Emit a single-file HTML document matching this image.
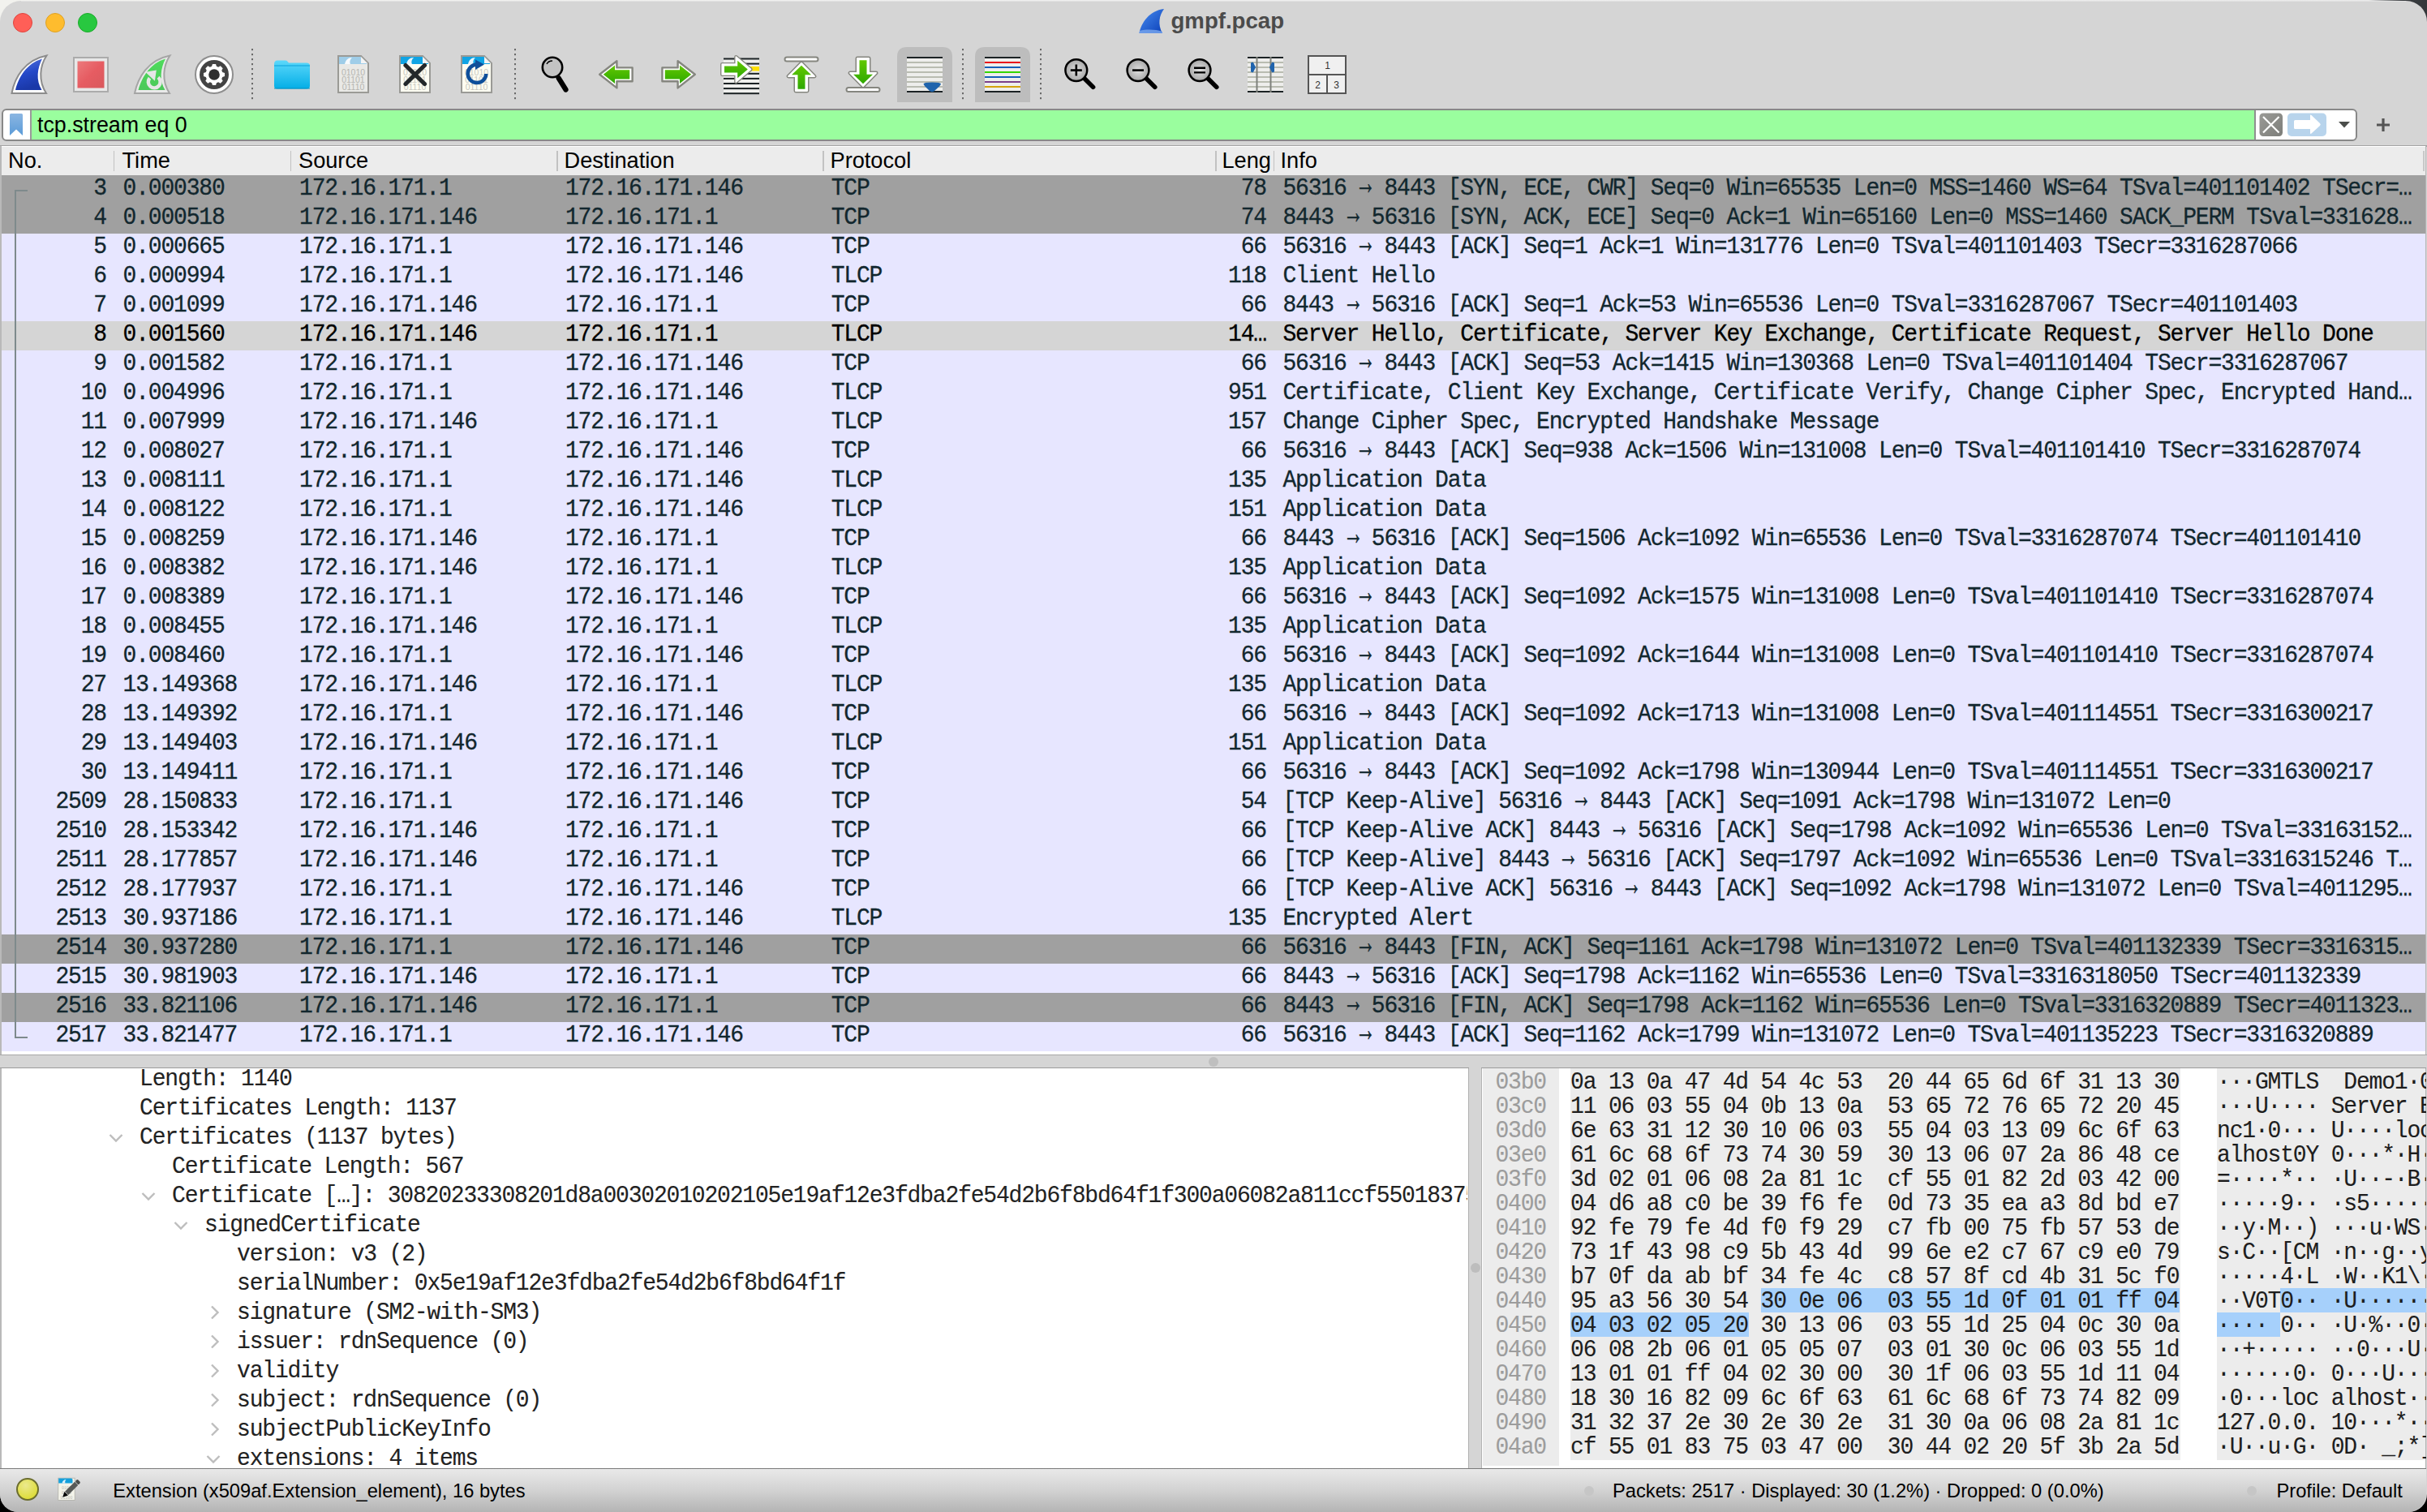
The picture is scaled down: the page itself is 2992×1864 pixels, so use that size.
<!DOCTYPE html><html><head><meta charset="utf-8"><style>
html,body{margin:0;padding:0;width:2992px;height:1864px;overflow:hidden;background:#000;}
#win{position:absolute;left:0;top:0;width:2992px;height:1864px;overflow:hidden;}
.m{position:absolute;white-space:pre;font-family:"Liberation Mono",monospace;font-size:28.0px;letter-spacing:-1.1727px;line-height:31.72px;transform:scaleY(1.06);transform-origin:0 23.31px;-webkit-text-stroke:0.3px currentColor;}
.ar{display:inline-block;transform:translateY(-1.0px) scale(0.88,1.4);transform-origin:50% 23.31px;}
.s{position:absolute;white-space:pre;font-family:"Liberation Sans",sans-serif;}
.r{position:absolute;}
svg{position:absolute;overflow:visible;}
</style></head><body><div id="win"><div class="r" style="left:0;top:0;width:2992px;height:40px;background:linear-gradient(90deg,#f2f2ee 0%,#eeeeee 60%,#eaeaea 97.6%,#3a3d40 99.0%,#33373a 100%);"></div>
<div class="r" style="left:0;top:1800px;width:2992px;height:64px;background:#000;"></div>
<div class="r" style="left:0;top:1.2px;width:2992px;height:1862.8px;background:#d5d5d5;border-radius:26px 26px 22px 22px;"></div>
<div class="r" style="left:26px;top:1.2px;width:2940px;height:1.2px;background:#e2e2e2;"></div>
<div class="r" style="left:16px;top:16px;width:22px;height:22px;border-radius:50%;background:#ff5f57;border:1px solid #e0443e;"></div>
<div class="r" style="left:56px;top:16px;width:22px;height:22px;border-radius:50%;background:#febc2e;border:1px solid #dea123;"></div>
<div class="r" style="left:96px;top:16px;width:22px;height:22px;border-radius:50%;background:#28c840;border:1px solid #1aab29;"></div>
<svg style="left:1404px;top:10px" width="32" height="32" viewBox="0 0 32 32">
<defs><linearGradient id="tfin" x1="0" y1="0" x2="1" y2="1"><stop offset="0" stop-color="#4a8ef0"/><stop offset="1" stop-color="#0a3fb8"/></linearGradient></defs>
<path d="M0.5,31 C3,18 13,3 31,1 C25,9 23,20 29,31 Z" fill="url(#tfin)"/>
<path d="M1,28 C9,26 20,26 29,29 L29,31 L0.5,31 Z" fill="#7aa8ee" opacity="0.8"/>
</svg>
<div class="s" style="left:1443.50px;top:11.31px;font-size:27.6px;line-height:30.83px;color:#4b4b4b;font-weight:700;">gmpf.pcap</div>
<svg style="left:0;top:0" width="1700" height="135" viewBox="0 0 1700 135"><defs>
<linearGradient id="gblue" x1="0" y1="0" x2="0.3" y2="1"><stop offset="0" stop-color="#5a78dc"/><stop offset="0.55" stop-color="#2448c8"/><stop offset="1" stop-color="#1a38a8"/></linearGradient>
<linearGradient id="ggreenfin" x1="0" y1="0" x2="0" y2="1"><stop offset="0" stop-color="#4fdc5c"/><stop offset="1" stop-color="#4cc85a"/></linearGradient>
<linearGradient id="gred" x1="0" y1="0" x2="1" y2="1"><stop offset="0" stop-color="#ec7a7c"/><stop offset="0.5" stop-color="#e65c62"/><stop offset="1" stop-color="#d9595d"/></linearGradient>
<linearGradient id="gfold" x1="0" y1="0" x2="0" y2="1"><stop offset="0" stop-color="#5cd8fb"/><stop offset="1" stop-color="#03aee6"/></linearGradient>
<radialGradient id="gmag" cx="0.5" cy="0.5" r="0.6"><stop offset="0" stop-color="#e2e2e2"/><stop offset="1" stop-color="#9a9a9a"/></radialGradient>
<linearGradient id="garrr" x1="0" y1="0" x2="0" y2="1"><stop offset="0" stop-color="#62c800"/><stop offset="1" stop-color="#2ea800"/></linearGradient>
<linearGradient id="garrl" x1="0" y1="1" x2="0" y2="0"><stop offset="0" stop-color="#62c800"/><stop offset="1" stop-color="#2ea800"/></linearGradient>
<linearGradient id="garru" x1="0" y1="0" x2="1" y2="0"><stop offset="0" stop-color="#2ea800"/><stop offset="1" stop-color="#62c800"/></linearGradient>
<linearGradient id="garrd" x1="0" y1="0" x2="1" y2="0"><stop offset="0" stop-color="#62c800"/><stop offset="1" stop-color="#2ea800"/></linearGradient>
</defs><path d="M14.5,115 C18,96 30,74 57.5,68.5 C49,81 47,100 57,115 Z" fill="#fff" stroke="#8c8c8c" stroke-width="2"/><path d="M19,111 C23,95 33,78 52,72.5 C46,84 44,99 51.5,111 Z" fill="url(#gblue)"/><rect x="91" y="71" width="42" height="42" fill="#e8e8e8" stroke="#ababab" stroke-width="2"/><rect x="95.5" y="75.5" width="33" height="33" fill="url(#gred)"/><path d="M166,115 C170,96 182,74 209.5,68.5 C201,81 199,100 209,115 Z" fill="#e9e9e9" stroke="#a5a5a5" stroke-width="2"/><path d="M170.5,111 C175,95 185,78 204,72.5 C198,84 196,99 203.5,111 Z" fill="url(#ggreenfin)"/><path d="M194.96,95.33 A7.4,7.4 0 1 1 184.53,96.24" fill="none" stroke="#e6e6e6" stroke-width="4.4"/><path d="M179.2,88.8 L192.8,86.6 L190.9,99.8 Z" fill="#e6e6e6"/><circle cx="264" cy="92" r="23" fill="#fff" stroke="#8e8e8e" stroke-width="2"/><circle cx="264" cy="92" r="18" fill="#434343"/><path d="M261.08,81.81 L261.94,78.96 L266.06,78.96 L266.92,81.81 L269.14,82.73 L271.76,81.32 L274.68,84.24 L273.27,86.86 L274.19,89.08 L277.04,89.94 L277.04,94.06 L274.19,94.92 L273.27,97.14 L274.68,99.76 L271.76,102.68 L269.14,101.27 L266.92,102.19 L266.06,105.04 L261.94,105.04 L261.08,102.19 L258.86,101.27 L256.24,102.68 L253.32,99.76 L254.73,97.14 L253.81,94.92 L250.96,94.06 L250.96,89.94 L253.81,89.08 L254.73,86.86 L253.32,84.24 L256.24,81.32 L258.86,82.73 Z" fill="#fff"/><circle cx="264" cy="92" r="6.8" fill="#2e2e2e"/><rect x="310" y="60" width="2" height="2.2" fill="#6a6a6a"/><rect x="310" y="66" width="2" height="2.2" fill="#6a6a6a"/><rect x="310" y="72" width="2" height="2.2" fill="#6a6a6a"/><rect x="310" y="78" width="2" height="2.2" fill="#6a6a6a"/><rect x="310" y="84" width="2" height="2.2" fill="#6a6a6a"/><rect x="310" y="90" width="2" height="2.2" fill="#6a6a6a"/><rect x="310" y="96" width="2" height="2.2" fill="#6a6a6a"/><rect x="310" y="102" width="2" height="2.2" fill="#6a6a6a"/><rect x="310" y="108" width="2" height="2.2" fill="#6a6a6a"/><rect x="310" y="114" width="2" height="2.2" fill="#6a6a6a"/><rect x="310" y="120" width="2" height="2.2" fill="#6a6a6a"/><rect x="634" y="60" width="2" height="2.2" fill="#6a6a6a"/><rect x="634" y="66" width="2" height="2.2" fill="#6a6a6a"/><rect x="634" y="72" width="2" height="2.2" fill="#6a6a6a"/><rect x="634" y="78" width="2" height="2.2" fill="#6a6a6a"/><rect x="634" y="84" width="2" height="2.2" fill="#6a6a6a"/><rect x="634" y="90" width="2" height="2.2" fill="#6a6a6a"/><rect x="634" y="96" width="2" height="2.2" fill="#6a6a6a"/><rect x="634" y="102" width="2" height="2.2" fill="#6a6a6a"/><rect x="634" y="108" width="2" height="2.2" fill="#6a6a6a"/><rect x="634" y="114" width="2" height="2.2" fill="#6a6a6a"/><rect x="634" y="120" width="2" height="2.2" fill="#6a6a6a"/><rect x="1186" y="60" width="2" height="2.2" fill="#6a6a6a"/><rect x="1186" y="66" width="2" height="2.2" fill="#6a6a6a"/><rect x="1186" y="72" width="2" height="2.2" fill="#6a6a6a"/><rect x="1186" y="78" width="2" height="2.2" fill="#6a6a6a"/><rect x="1186" y="84" width="2" height="2.2" fill="#6a6a6a"/><rect x="1186" y="90" width="2" height="2.2" fill="#6a6a6a"/><rect x="1186" y="96" width="2" height="2.2" fill="#6a6a6a"/><rect x="1186" y="102" width="2" height="2.2" fill="#6a6a6a"/><rect x="1186" y="108" width="2" height="2.2" fill="#6a6a6a"/><rect x="1186" y="114" width="2" height="2.2" fill="#6a6a6a"/><rect x="1186" y="120" width="2" height="2.2" fill="#6a6a6a"/><rect x="1282" y="60" width="2" height="2.2" fill="#6a6a6a"/><rect x="1282" y="66" width="2" height="2.2" fill="#6a6a6a"/><rect x="1282" y="72" width="2" height="2.2" fill="#6a6a6a"/><rect x="1282" y="78" width="2" height="2.2" fill="#6a6a6a"/><rect x="1282" y="84" width="2" height="2.2" fill="#6a6a6a"/><rect x="1282" y="90" width="2" height="2.2" fill="#6a6a6a"/><rect x="1282" y="96" width="2" height="2.2" fill="#6a6a6a"/><rect x="1282" y="102" width="2" height="2.2" fill="#6a6a6a"/><rect x="1282" y="108" width="2" height="2.2" fill="#6a6a6a"/><rect x="1282" y="114" width="2" height="2.2" fill="#6a6a6a"/><rect x="1282" y="120" width="2" height="2.2" fill="#6a6a6a"/><path d="M338,79 Q338,74.5 342,74.5 L352,74.5 Q354,74.5 355,76.5 L356,77.5 L378,77.5 Q382,77.5 382,81 L382,106 Q382,109.5 378,109.5 L342,109.5 Q338,109.5 338,106 Z" fill="url(#gfold)"/><path d="M338,81 L382,81" stroke="#0aa0d8" stroke-width="1"/><rect x="338" y="108" width="44" height="2" fill="#0891c0" opacity="0.5"/><path d="M417,69 L445,69 L454,78 L454,114 L417,114 Z" fill="#e9e9e6" stroke="#9a9a96" stroke-width="2"/><path d="M418,70 L444.5,70 L452,77.5 L452,79 L418,79 Z" fill="#9fcde8"/><path d="M445,70 L445,78 L453,78 Z" fill="#f4f4f4"/><path d="M425,79 C426,74 429,71 434,71 C431,74 431,77 432,79 Z" fill="#fff" opacity="0.9"/><text x="435.5" y="93.0" font-family="Liberation Sans" font-size="10.5" fill="#b5b5b0" text-anchor="middle" letter-spacing="0">01010</text><text x="435.5" y="102.2" font-family="Liberation Sans" font-size="10.5" fill="#b5b5b0" text-anchor="middle" letter-spacing="0">01101</text><text x="435.5" y="111.4" font-family="Liberation Sans" font-size="10.5" fill="#b5b5b0" text-anchor="middle" letter-spacing="0">01110</text><path d="M493,69 L521,69 L530,78 L530,114 L493,114 Z" fill="#fdfdf2" stroke="#9a9a96" stroke-width="2"/><path d="M494,70 L520.5,70 L528,77.5 L528,79 L494,79 Z" fill="#10a4e4"/><path d="M521,70 L521,78 L529,78 Z" fill="#f4f4f4"/><path d="M501,79 C502,74 505,71 510,71 C507,74 507,77 508,79 Z" fill="#fff" opacity="0.9"/><text x="511.5" y="93.0" font-family="Liberation Sans" font-size="10.5" fill="#c8c8c0" text-anchor="middle" letter-spacing="0">01010</text><text x="511.5" y="102.2" font-family="Liberation Sans" font-size="10.5" fill="#c8c8c0" text-anchor="middle" letter-spacing="0">01101</text><text x="511.5" y="111.4" font-family="Liberation Sans" font-size="10.5" fill="#c8c8c0" text-anchor="middle" letter-spacing="0">01110</text><path d="M500,80.5 L523.5,103.5 M523.5,80.5 L500,103.5" stroke="#23282a" stroke-width="5.2" stroke-linecap="round"/><path d="M569,69 L597,69 L606,78 L606,114 L569,114 Z" fill="#fdfdf2" stroke="#9a9a96" stroke-width="2"/><path d="M570,70 L596.5,70 L604,77.5 L604,79 L570,79 Z" fill="#10a4e4"/><path d="M597,70 L597,78 L605,78 Z" fill="#f4f4f4"/><path d="M577,79 C578,74 581,71 586,71 C583,74 583,77 584,79 Z" fill="#fff" opacity="0.9"/><text x="587.5" y="93.0" font-family="Liberation Sans" font-size="10.5" fill="#c8c8c0" text-anchor="middle" letter-spacing="0">01010</text><text x="587.5" y="102.2" font-family="Liberation Sans" font-size="10.5" fill="#c8c8c0" text-anchor="middle" letter-spacing="0">01101</text><text x="587.5" y="111.4" font-family="Liberation Sans" font-size="10.5" fill="#c8c8c0" text-anchor="middle" letter-spacing="0">01110</text><path d="M599.3,91 A11.3,11.3 0 1 1 588,79.5" fill="none" stroke="#0e4f9a" stroke-width="4.5"/><path d="M586,73.5 L597,79.5 L586,86 Z" fill="#0e4f9a"/><line x1="688.5" y1="96" x2="697.5" y2="110.5" stroke="#000" stroke-width="6.2" stroke-linecap="round"/><circle cx="681" cy="83" r="12.2" fill="#c3c3c3" stroke="#000" stroke-width="2.6"/><path d="M674,79 Q676,75 681,75" fill="none" stroke="#000" stroke-width="1.5"/><g transform="translate(760,91.8) rotate(180)"><path d="M-19.6,-8.4 L-0.4,-8.4 L-0.4,-16.6 L20.8,0 L-0.4,16.6 L-0.4,8.4 L-19.6,8.4 Z" fill="#fff" stroke="#85867f" stroke-width="2.4" stroke-linejoin="round"/><path d="M-16.2,-5.6 L2,-5.6 L2,-11.2 L16.2,0 L2,11.2 L2,5.6 L-16.2,5.6 Z" fill="url(#garrl)"/></g><g transform="translate(836,91.8) rotate(0)"><path d="M-19.6,-8.4 L-0.4,-8.4 L-0.4,-16.6 L20.8,0 L-0.4,16.6 L-0.4,8.4 L-19.6,8.4 Z" fill="#fff" stroke="#85867f" stroke-width="2.4" stroke-linejoin="round"/><path d="M-16.2,-5.6 L2,-5.6 L2,-11.2 L16.2,0 L2,11.2 L2,5.6 L-16.2,5.6 Z" fill="url(#garrr)"/></g><rect x="892" y="72" width="44" height="44" fill="#eeeeec"/><rect x="892" y="71.5" width="44" height="2" fill="#1b2224"/><rect x="892" y="77.6" width="44" height="2" fill="#1b2224"/><rect x="892" y="89.8" width="44" height="2" fill="#1b2224"/><rect x="892" y="95.9" width="44" height="2" fill="#1b2224"/><rect x="892" y="102.0" width="44" height="2" fill="#1b2224"/><rect x="892" y="108.1" width="44" height="2" fill="#1b2224"/><rect x="892" y="114.19999999999999" width="44" height="2" fill="#1b2224"/><rect x="925" y="82" width="11" height="5.5" fill="#ffe000"/><g transform="translate(906.5,85.5) scale(0.9)"><path d="M-18,-7 L1,-7 L1,-17 L21,0 L1,17 L1,7 L-18,7 Z" fill="#fff" stroke="#85867f" stroke-width="5" stroke-linejoin="round"/><path d="M-18,-7 L1,-7 L1,-17 L21,0 L1,17 L1,7 L-18,7 Z" fill="#fff" stroke="#fff" stroke-width="2" stroke-linejoin="round"/><path d="M-15,-4.5 L3,-4.5 L3,-12 L17,0 L3,12 L3,4.5 L-15,4.5 Z" fill="url(#garrr)"/></g><rect x="967.5" y="70.5" width="41" height="5" rx="2.5" fill="#fff" stroke="#85867f" stroke-width="2"/><g transform="translate(988,95) rotate(-90) scale(0.95,1)"><path d="M-18,-7 L1,-7 L1,-16 L18,0 L1,16 L1,7 L-18,7 Z" fill="#fff" stroke="#85867f" stroke-width="5" stroke-linejoin="round"/><path d="M-18,-7 L1,-7 L1,-16 L18,0 L1,16 L1,7 L-18,7 Z" fill="#fff" stroke="#fff" stroke-width="2" stroke-linejoin="round"/><path d="M-15.5,-4.5 L3,-4.5 L3,-12 L15,0 L3,12 L3,4.5 L-15.5,4.5 Z" fill="url(#garru)"/></g><rect x="1043.5" y="108" width="41" height="5" rx="2.5" fill="#fff" stroke="#85867f" stroke-width="2"/><g transform="translate(1064,89) rotate(90) scale(0.95,1)"><path d="M-18,-7 L1,-7 L1,-16 L18,0 L1,16 L1,7 L-18,7 Z" fill="#fff" stroke="#85867f" stroke-width="5" stroke-linejoin="round"/><path d="M-18,-7 L1,-7 L1,-16 L18,0 L1,16 L1,7 L-18,7 Z" fill="#fff" stroke="#fff" stroke-width="2" stroke-linejoin="round"/><path d="M-15.5,-4.5 L3,-4.5 L3,-12 L15,0 L3,12 L3,4.5 L-15.5,4.5 Z" fill="url(#garrd)"/></g><path d="M1106,126 L1106,70 Q1106,58 1118,58 L1162,58 Q1174,58 1174,70 L1174,126 Z" fill="#bdbdbd"/><rect x="1118" y="70" width="44" height="44" fill="#eeeeec"/><rect x="1118" y="70" width="44" height="2" fill="#1b2224"/><rect x="1118" y="112" width="44" height="2" fill="#1b2224"/><rect x="1118" y="76" width="44" height="2" fill="#b9bcb1"/><rect x="1118" y="82" width="44" height="2" fill="#b9bcb1"/><rect x="1118" y="88" width="44" height="2" fill="#b9bcb1"/><rect x="1118" y="94" width="44" height="2" fill="#b9bcb1"/><rect x="1118" y="100" width="44" height="2" fill="#b9bcb1"/><rect x="1118" y="106" width="44" height="2" fill="#b9bcb1"/><path d="M1138.5,103.5 Q1138.5,101.5 1149,101.5 Q1160,101.5 1160,103.5 Q1160,105 1152,112 Q1149,114.5 1146,112 Q1138.5,105 1138.5,103.5 Z" fill="#2064ac"/><path d="M1202,126 L1202,70 Q1202,58 1214,58 L1258,58 Q1270,58 1270,70 L1270,126 Z" fill="#bdbdbd"/><rect x="1214" y="70" width="44" height="44" fill="#eeeeec"/><rect x="1214" y="70" width="44" height="2" fill="#1b2224"/><rect x="1214" y="112" width="44" height="2" fill="#1b2224"/><rect x="1214" y="76" width="44" height="2" fill="#e8131b"/><rect x="1214" y="82" width="44" height="2" fill="#1560b8"/><rect x="1214" y="88" width="44" height="2" fill="#33d600"/><rect x="1214" y="94" width="44" height="2" fill="#1560b8"/><rect x="1214" y="100" width="44" height="2" fill="#7a3e8a"/><rect x="1214" y="106" width="44" height="2" fill="#d4a20e"/><line x1="1335.108" y1="94.90799999999999" x2="1347.57" y2="107.36999999999999" stroke="#000" stroke-width="5.6" stroke-linecap="round"/><circle cx="1326.8" cy="86.6" r="13.4" fill="url(#gmag)" stroke="#000" stroke-width="2.5"/><path d="M1319.8,86.6 H1333.8 M1326.8,79.6 V93.6" stroke="#000" stroke-width="2.6"/><line x1="1411.308" y1="94.90799999999999" x2="1423.77" y2="107.36999999999999" stroke="#000" stroke-width="5.6" stroke-linecap="round"/><circle cx="1403" cy="86.6" r="13.4" fill="url(#gmag)" stroke="#000" stroke-width="2.5"/><path d="M1396,86.6 H1410" stroke="#000" stroke-width="2.6"/><line x1="1487.308" y1="94.90799999999999" x2="1499.77" y2="107.36999999999999" stroke="#000" stroke-width="5.6" stroke-linecap="round"/><circle cx="1479" cy="86.6" r="13.4" fill="url(#gmag)" stroke="#000" stroke-width="2.5"/><path d="M1472,83.8 H1486 M1472,89.39999999999999 H1486" stroke="#000" stroke-width="2.4"/><rect x="1538" y="70" width="44" height="44" fill="#eeeeec"/><rect x="1538" y="76" width="44" height="2" fill="#b9bcb1"/><rect x="1538" y="82" width="44" height="2" fill="#b9bcb1"/><rect x="1538" y="88" width="44" height="2" fill="#b9bcb1"/><rect x="1538" y="94" width="44" height="2" fill="#b9bcb1"/><rect x="1538" y="100" width="44" height="2" fill="#b9bcb1"/><rect x="1538" y="106" width="44" height="2" fill="#b9bcb1"/><rect x="1538" y="70" width="44" height="2" fill="#1b2224"/><rect x="1538" y="112" width="44" height="2" fill="#1b2224"/><rect x="1548.5" y="70" width="2" height="44" fill="#7f817c"/><rect x="1565.5" y="70" width="2" height="44" fill="#7f817c"/><path d="M1542,78 Q1543,76 1545,77 L1548,83 L1545,89 Q1543,90 1542,88 Z" fill="#1f63ad"/><path d="M1571,78 Q1570,76 1568,77 L1565,83 L1568,89 Q1570,90 1571,88 Z" fill="#1f63ad"/><rect x="1613" y="69" width="46" height="46" fill="#f0f0f0" stroke="#555" stroke-width="2"/><path d="M1613,92 H1659 M1636,92 V115" stroke="#555" stroke-width="2"/><text x="1636.5" y="85" font-family="Liberation Sans" font-size="12" fill="#333" text-anchor="middle">1</text><text x="1624.5" y="108.5" font-family="Liberation Sans" font-size="12" fill="#333" text-anchor="middle">2</text><text x="1647.5" y="108.5" font-family="Liberation Sans" font-size="12" fill="#333" text-anchor="middle">3</text></svg>
<div class="r" style="left:2px;top:134px;width:2900px;height:36px;border:2px solid #888;border-radius:6px;background:#fff;"></div>
<div class="r" style="left:38px;top:136px;width:2741px;height:36px;background:#9afe9e;"></div>
<div class="r" style="left:37px;top:136px;width:1.6px;height:36px;background:#9a9a9a;"></div>
<div class="r" style="left:2779px;top:136px;width:2px;height:36px;background:#8f8f8f;"></div>
<svg style="left:10px;top:138px" width="22" height="32" viewBox="0 0 22 32">
<defs><linearGradient id="gbm" x1="0" y1="0" x2="0" y2="1"><stop offset="0" stop-color="#8bb6e2"/><stop offset="1" stop-color="#5b9bd8"/></linearGradient></defs>
<path d="M2,3.5 Q2,2 3.5,2 L16.5,2 Q18,2 18,3.5 L18,29 L10,21.5 L2,29 Z" fill="url(#gbm)"/></svg>
<div class="s" style="left:46.00px;top:139.74px;font-size:26.8px;line-height:29.94px;color:#000;font-weight:400;">tcp.stream eq 0</div>
<svg style="left:2785px;top:139px" width="30" height="30" viewBox="0 0 30 30">
<defs><linearGradient id="gclr" x1="0" y1="0" x2="1" y2="1"><stop offset="0" stop-color="#9a9a96"/><stop offset="1" stop-color="#7d7e7a"/></linearGradient></defs>
<rect x="0.5" y="0.5" width="28.5" height="28.5" rx="4.5" fill="url(#gclr)"/>
<path d="M5,5 L24.5,24.5 M24.5,5 L5,24.5" stroke="#fff" stroke-width="2.2"/></svg>
<svg style="left:2820px;top:139px" width="50" height="30" viewBox="0 0 50 30">
<rect x="0" y="0.5" width="48" height="28.5" rx="5" fill="#b8d4ec"/>
<path d="M8,10.5 Q8,9 9.5,9 L28,9 L28,3.5 Q28,2 29.5,3 L40,13 Q41.5,14.5 40,16 L29.5,25.5 Q28,26.5 28,25 L28,20 L9.5,20 Q8,20 8,18.5 Z" fill="#fff"/></svg>
<svg style="left:2882px;top:149px" width="16" height="10" viewBox="0 0 16 10"><path d="M1,1 L15,1 L8,8.5 Z" fill="#4a4d4a"/></svg>
<svg style="left:2929px;top:145px" width="18" height="18" viewBox="0 0 18 18"><path d="M1,9 H17 M9,1 V17" stroke="#555" stroke-width="3.2"/></svg>
<div class="r" style="left:0px;top:178.5px;width:2992px;height:2.5px;background:#a4a4a4;"></div>
<div class="r" style="left:0px;top:180px;width:2990px;height:1120px;background:#fff;"></div>
<div class="r" style="left:0px;top:180px;width:1.8px;height:1120px;background:#b9b9b9;"></div>
<div class="r" style="left:2990px;top:180px;width:1.2px;height:1120px;background:#b5b5b5;"></div>
<div class="r" style="left:2px;top:181px;width:2988px;height:35px;background:#ececec;"></div>
<div class="r" style="left:139.95px;top:186px;width:1.5px;height:25px;background:#c2c2c2;"></div>
<div class="r" style="left:357.75px;top:186px;width:1.5px;height:25px;background:#c2c2c2;"></div>
<div class="r" style="left:686.25px;top:186px;width:1.5px;height:25px;background:#c2c2c2;"></div>
<div class="r" style="left:1014.45px;top:186px;width:1.5px;height:25px;background:#c2c2c2;"></div>
<div class="r" style="left:1498.45px;top:186px;width:1.5px;height:25px;background:#c2c2c2;"></div>
<div class="r" style="left:1569.75px;top:186px;width:1.5px;height:25px;background:#c2c2c2;"></div>
<div class="r" style="left:2986.5px;top:186px;width:2px;height:25px;background:#c8c8c8;"></div>
<div class="s" style="left:10.00px;top:183.18px;font-size:27.2px;line-height:30.39px;color:#000;font-weight:400;">No.</div>
<div class="s" style="left:150.50px;top:183.18px;font-size:27.2px;line-height:30.39px;color:#000;font-weight:400;">Time</div>
<div class="s" style="left:368.00px;top:183.18px;font-size:27.2px;line-height:30.39px;color:#000;font-weight:400;">Source</div>
<div class="s" style="left:695.50px;top:183.18px;font-size:27.2px;line-height:30.39px;color:#000;font-weight:400;">Destination</div>
<div class="s" style="left:1023.50px;top:183.18px;font-size:27.2px;line-height:30.39px;color:#000;font-weight:400;">Protocol</div>
<div class="s" style="left:1506.50px;top:183.18px;font-size:27.2px;line-height:30.39px;color:#000;font-weight:400;width:62px;overflow:hidden;">Leng</div>
<div class="s" style="left:1578.50px;top:183.18px;font-size:27.2px;line-height:30.39px;color:#000;font-weight:400;">Info</div>
<div class="r" style="left:2px;top:216px;width:2988px;height:36px;background:#a0a0a0;"></div>
<div class="m" style="left:115.37px;top:216.69px;color:#12272e;">3</div>
<div class="m" style="left:151.55px;top:216.69px;color:#12272e;">0.000380</div>
<div class="m" style="left:369.05px;top:216.69px;color:#12272e;">172.16.171.1</div>
<div class="m" style="left:696.95px;top:216.69px;color:#12272e;">172.16.171.146</div>
<div class="m" style="left:1024.70px;top:216.69px;color:#12272e;">TCP</div>
<div class="m" style="left:1529.64px;top:216.69px;color:#12272e;">78</div>
<div class="m" style="left:1581.45px;top:216.69px;color:#12272e;width:1400px;overflow:hidden;">56316 <span class="ar">→</span> 8443 [SYN, ECE, CWR] Seq=0 Win=65535 Len=0 MSS=1460 WS=64 TSval=401101402 TSecr=…</div>
<div class="r" style="left:2px;top:252px;width:2988px;height:36px;background:#a0a0a0;"></div>
<div class="m" style="left:115.37px;top:252.69px;color:#12272e;">4</div>
<div class="m" style="left:151.55px;top:252.69px;color:#12272e;">0.000518</div>
<div class="m" style="left:369.05px;top:252.69px;color:#12272e;">172.16.171.146</div>
<div class="m" style="left:696.95px;top:252.69px;color:#12272e;">172.16.171.1</div>
<div class="m" style="left:1024.70px;top:252.69px;color:#12272e;">TCP</div>
<div class="m" style="left:1529.64px;top:252.69px;color:#12272e;">74</div>
<div class="m" style="left:1581.45px;top:252.69px;color:#12272e;width:1400px;overflow:hidden;">8443 <span class="ar">→</span> 56316 [SYN, ACK, ECE] Seq=0 Ack=1 Win=65160 Len=0 MSS=1460 SACK_PERM TSval=331628…</div>
<div class="r" style="left:2px;top:288px;width:2988px;height:36px;background:#e7e6ff;"></div>
<div class="m" style="left:115.37px;top:288.69px;color:#12272e;">5</div>
<div class="m" style="left:151.55px;top:288.69px;color:#12272e;">0.000665</div>
<div class="m" style="left:369.05px;top:288.69px;color:#12272e;">172.16.171.1</div>
<div class="m" style="left:696.95px;top:288.69px;color:#12272e;">172.16.171.146</div>
<div class="m" style="left:1024.70px;top:288.69px;color:#12272e;">TCP</div>
<div class="m" style="left:1529.64px;top:288.69px;color:#12272e;">66</div>
<div class="m" style="left:1581.45px;top:288.69px;color:#12272e;width:1400px;overflow:hidden;">56316 <span class="ar">→</span> 8443 [ACK] Seq=1 Ack=1 Win=131776 Len=0 TSval=401101403 TSecr=3316287066</div>
<div class="r" style="left:2px;top:324px;width:2988px;height:36px;background:#e7e6ff;"></div>
<div class="m" style="left:115.37px;top:324.69px;color:#12272e;">6</div>
<div class="m" style="left:151.55px;top:324.69px;color:#12272e;">0.000994</div>
<div class="m" style="left:369.05px;top:324.69px;color:#12272e;">172.16.171.1</div>
<div class="m" style="left:696.95px;top:324.69px;color:#12272e;">172.16.171.146</div>
<div class="m" style="left:1024.70px;top:324.69px;color:#12272e;">TLCP</div>
<div class="m" style="left:1514.01px;top:324.69px;color:#12272e;">118</div>
<div class="m" style="left:1581.45px;top:324.69px;color:#12272e;width:1400px;overflow:hidden;">Client Hello</div>
<div class="r" style="left:2px;top:360px;width:2988px;height:36px;background:#e7e6ff;"></div>
<div class="m" style="left:115.37px;top:360.69px;color:#12272e;">7</div>
<div class="m" style="left:151.55px;top:360.69px;color:#12272e;">0.001099</div>
<div class="m" style="left:369.05px;top:360.69px;color:#12272e;">172.16.171.146</div>
<div class="m" style="left:696.95px;top:360.69px;color:#12272e;">172.16.171.1</div>
<div class="m" style="left:1024.70px;top:360.69px;color:#12272e;">TCP</div>
<div class="m" style="left:1529.64px;top:360.69px;color:#12272e;">66</div>
<div class="m" style="left:1581.45px;top:360.69px;color:#12272e;width:1400px;overflow:hidden;">8443 <span class="ar">→</span> 56316 [ACK] Seq=1 Ack=53 Win=65536 Len=0 TSval=3316287067 TSecr=401101403</div>
<div class="r" style="left:2px;top:396px;width:2988px;height:36px;background:#d5d5d5;"></div>
<div class="m" style="left:115.37px;top:396.69px;color:#000000;">8</div>
<div class="m" style="left:151.55px;top:396.69px;color:#000000;">0.001560</div>
<div class="m" style="left:369.05px;top:396.69px;color:#000000;">172.16.171.146</div>
<div class="m" style="left:696.95px;top:396.69px;color:#000000;">172.16.171.1</div>
<div class="m" style="left:1024.70px;top:396.69px;color:#000000;">TLCP</div>
<div class="m" style="left:1514.01px;top:396.69px;color:#000000;">14…</div>
<div class="m" style="left:1581.45px;top:396.69px;color:#000000;width:1400px;overflow:hidden;">Server Hello, Certificate, Server Key Exchange, Certificate Request, Server Hello Done</div>
<div class="r" style="left:2px;top:432px;width:2988px;height:36px;background:#e7e6ff;"></div>
<div class="m" style="left:115.37px;top:432.69px;color:#12272e;">9</div>
<div class="m" style="left:151.55px;top:432.69px;color:#12272e;">0.001582</div>
<div class="m" style="left:369.05px;top:432.69px;color:#12272e;">172.16.171.1</div>
<div class="m" style="left:696.95px;top:432.69px;color:#12272e;">172.16.171.146</div>
<div class="m" style="left:1024.70px;top:432.69px;color:#12272e;">TCP</div>
<div class="m" style="left:1529.64px;top:432.69px;color:#12272e;">66</div>
<div class="m" style="left:1581.45px;top:432.69px;color:#12272e;width:1400px;overflow:hidden;">56316 <span class="ar">→</span> 8443 [ACK] Seq=53 Ack=1415 Win=130368 Len=0 TSval=401101404 TSecr=3316287067</div>
<div class="r" style="left:2px;top:468px;width:2988px;height:36px;background:#e7e6ff;"></div>
<div class="m" style="left:99.74px;top:468.69px;color:#12272e;">10</div>
<div class="m" style="left:151.55px;top:468.69px;color:#12272e;">0.004996</div>
<div class="m" style="left:369.05px;top:468.69px;color:#12272e;">172.16.171.1</div>
<div class="m" style="left:696.95px;top:468.69px;color:#12272e;">172.16.171.146</div>
<div class="m" style="left:1024.70px;top:468.69px;color:#12272e;">TLCP</div>
<div class="m" style="left:1514.01px;top:468.69px;color:#12272e;">951</div>
<div class="m" style="left:1581.45px;top:468.69px;color:#12272e;width:1400px;overflow:hidden;">Certificate, Client Key Exchange, Certificate Verify, Change Cipher Spec, Encrypted Hand…</div>
<div class="r" style="left:2px;top:504px;width:2988px;height:36px;background:#e7e6ff;"></div>
<div class="m" style="left:99.74px;top:504.69px;color:#12272e;">11</div>
<div class="m" style="left:151.55px;top:504.69px;color:#12272e;">0.007999</div>
<div class="m" style="left:369.05px;top:504.69px;color:#12272e;">172.16.171.146</div>
<div class="m" style="left:696.95px;top:504.69px;color:#12272e;">172.16.171.1</div>
<div class="m" style="left:1024.70px;top:504.69px;color:#12272e;">TLCP</div>
<div class="m" style="left:1514.01px;top:504.69px;color:#12272e;">157</div>
<div class="m" style="left:1581.45px;top:504.69px;color:#12272e;width:1400px;overflow:hidden;">Change Cipher Spec, Encrypted Handshake Message</div>
<div class="r" style="left:2px;top:540px;width:2988px;height:36px;background:#e7e6ff;"></div>
<div class="m" style="left:99.74px;top:540.69px;color:#12272e;">12</div>
<div class="m" style="left:151.55px;top:540.69px;color:#12272e;">0.008027</div>
<div class="m" style="left:369.05px;top:540.69px;color:#12272e;">172.16.171.1</div>
<div class="m" style="left:696.95px;top:540.69px;color:#12272e;">172.16.171.146</div>
<div class="m" style="left:1024.70px;top:540.69px;color:#12272e;">TCP</div>
<div class="m" style="left:1529.64px;top:540.69px;color:#12272e;">66</div>
<div class="m" style="left:1581.45px;top:540.69px;color:#12272e;width:1400px;overflow:hidden;">56316 <span class="ar">→</span> 8443 [ACK] Seq=938 Ack=1506 Win=131008 Len=0 TSval=401101410 TSecr=3316287074</div>
<div class="r" style="left:2px;top:576px;width:2988px;height:36px;background:#e7e6ff;"></div>
<div class="m" style="left:99.74px;top:576.69px;color:#12272e;">13</div>
<div class="m" style="left:151.55px;top:576.69px;color:#12272e;">0.008111</div>
<div class="m" style="left:369.05px;top:576.69px;color:#12272e;">172.16.171.1</div>
<div class="m" style="left:696.95px;top:576.69px;color:#12272e;">172.16.171.146</div>
<div class="m" style="left:1024.70px;top:576.69px;color:#12272e;">TLCP</div>
<div class="m" style="left:1514.01px;top:576.69px;color:#12272e;">135</div>
<div class="m" style="left:1581.45px;top:576.69px;color:#12272e;width:1400px;overflow:hidden;">Application Data</div>
<div class="r" style="left:2px;top:612px;width:2988px;height:36px;background:#e7e6ff;"></div>
<div class="m" style="left:99.74px;top:612.69px;color:#12272e;">14</div>
<div class="m" style="left:151.55px;top:612.69px;color:#12272e;">0.008122</div>
<div class="m" style="left:369.05px;top:612.69px;color:#12272e;">172.16.171.1</div>
<div class="m" style="left:696.95px;top:612.69px;color:#12272e;">172.16.171.146</div>
<div class="m" style="left:1024.70px;top:612.69px;color:#12272e;">TLCP</div>
<div class="m" style="left:1514.01px;top:612.69px;color:#12272e;">151</div>
<div class="m" style="left:1581.45px;top:612.69px;color:#12272e;width:1400px;overflow:hidden;">Application Data</div>
<div class="r" style="left:2px;top:648px;width:2988px;height:36px;background:#e7e6ff;"></div>
<div class="m" style="left:99.74px;top:648.69px;color:#12272e;">15</div>
<div class="m" style="left:151.55px;top:648.69px;color:#12272e;">0.008259</div>
<div class="m" style="left:369.05px;top:648.69px;color:#12272e;">172.16.171.146</div>
<div class="m" style="left:696.95px;top:648.69px;color:#12272e;">172.16.171.1</div>
<div class="m" style="left:1024.70px;top:648.69px;color:#12272e;">TCP</div>
<div class="m" style="left:1529.64px;top:648.69px;color:#12272e;">66</div>
<div class="m" style="left:1581.45px;top:648.69px;color:#12272e;width:1400px;overflow:hidden;">8443 <span class="ar">→</span> 56316 [ACK] Seq=1506 Ack=1092 Win=65536 Len=0 TSval=3316287074 TSecr=401101410</div>
<div class="r" style="left:2px;top:684px;width:2988px;height:36px;background:#e7e6ff;"></div>
<div class="m" style="left:99.74px;top:684.69px;color:#12272e;">16</div>
<div class="m" style="left:151.55px;top:684.69px;color:#12272e;">0.008382</div>
<div class="m" style="left:369.05px;top:684.69px;color:#12272e;">172.16.171.146</div>
<div class="m" style="left:696.95px;top:684.69px;color:#12272e;">172.16.171.1</div>
<div class="m" style="left:1024.70px;top:684.69px;color:#12272e;">TLCP</div>
<div class="m" style="left:1514.01px;top:684.69px;color:#12272e;">135</div>
<div class="m" style="left:1581.45px;top:684.69px;color:#12272e;width:1400px;overflow:hidden;">Application Data</div>
<div class="r" style="left:2px;top:720px;width:2988px;height:36px;background:#e7e6ff;"></div>
<div class="m" style="left:99.74px;top:720.69px;color:#12272e;">17</div>
<div class="m" style="left:151.55px;top:720.69px;color:#12272e;">0.008389</div>
<div class="m" style="left:369.05px;top:720.69px;color:#12272e;">172.16.171.1</div>
<div class="m" style="left:696.95px;top:720.69px;color:#12272e;">172.16.171.146</div>
<div class="m" style="left:1024.70px;top:720.69px;color:#12272e;">TCP</div>
<div class="m" style="left:1529.64px;top:720.69px;color:#12272e;">66</div>
<div class="m" style="left:1581.45px;top:720.69px;color:#12272e;width:1400px;overflow:hidden;">56316 <span class="ar">→</span> 8443 [ACK] Seq=1092 Ack=1575 Win=131008 Len=0 TSval=401101410 TSecr=3316287074</div>
<div class="r" style="left:2px;top:756px;width:2988px;height:36px;background:#e7e6ff;"></div>
<div class="m" style="left:99.74px;top:756.69px;color:#12272e;">18</div>
<div class="m" style="left:151.55px;top:756.69px;color:#12272e;">0.008455</div>
<div class="m" style="left:369.05px;top:756.69px;color:#12272e;">172.16.171.146</div>
<div class="m" style="left:696.95px;top:756.69px;color:#12272e;">172.16.171.1</div>
<div class="m" style="left:1024.70px;top:756.69px;color:#12272e;">TLCP</div>
<div class="m" style="left:1514.01px;top:756.69px;color:#12272e;">135</div>
<div class="m" style="left:1581.45px;top:756.69px;color:#12272e;width:1400px;overflow:hidden;">Application Data</div>
<div class="r" style="left:2px;top:792px;width:2988px;height:36px;background:#e7e6ff;"></div>
<div class="m" style="left:99.74px;top:792.69px;color:#12272e;">19</div>
<div class="m" style="left:151.55px;top:792.69px;color:#12272e;">0.008460</div>
<div class="m" style="left:369.05px;top:792.69px;color:#12272e;">172.16.171.1</div>
<div class="m" style="left:696.95px;top:792.69px;color:#12272e;">172.16.171.146</div>
<div class="m" style="left:1024.70px;top:792.69px;color:#12272e;">TCP</div>
<div class="m" style="left:1529.64px;top:792.69px;color:#12272e;">66</div>
<div class="m" style="left:1581.45px;top:792.69px;color:#12272e;width:1400px;overflow:hidden;">56316 <span class="ar">→</span> 8443 [ACK] Seq=1092 Ack=1644 Win=131008 Len=0 TSval=401101410 TSecr=3316287074</div>
<div class="r" style="left:2px;top:828px;width:2988px;height:36px;background:#e7e6ff;"></div>
<div class="m" style="left:99.74px;top:828.69px;color:#12272e;">27</div>
<div class="m" style="left:151.55px;top:828.69px;color:#12272e;">13.149368</div>
<div class="m" style="left:369.05px;top:828.69px;color:#12272e;">172.16.171.146</div>
<div class="m" style="left:696.95px;top:828.69px;color:#12272e;">172.16.171.1</div>
<div class="m" style="left:1024.70px;top:828.69px;color:#12272e;">TLCP</div>
<div class="m" style="left:1514.01px;top:828.69px;color:#12272e;">135</div>
<div class="m" style="left:1581.45px;top:828.69px;color:#12272e;width:1400px;overflow:hidden;">Application Data</div>
<div class="r" style="left:2px;top:864px;width:2988px;height:36px;background:#e7e6ff;"></div>
<div class="m" style="left:99.74px;top:864.69px;color:#12272e;">28</div>
<div class="m" style="left:151.55px;top:864.69px;color:#12272e;">13.149392</div>
<div class="m" style="left:369.05px;top:864.69px;color:#12272e;">172.16.171.1</div>
<div class="m" style="left:696.95px;top:864.69px;color:#12272e;">172.16.171.146</div>
<div class="m" style="left:1024.70px;top:864.69px;color:#12272e;">TCP</div>
<div class="m" style="left:1529.64px;top:864.69px;color:#12272e;">66</div>
<div class="m" style="left:1581.45px;top:864.69px;color:#12272e;width:1400px;overflow:hidden;">56316 <span class="ar">→</span> 8443 [ACK] Seq=1092 Ack=1713 Win=131008 Len=0 TSval=401114551 TSecr=3316300217</div>
<div class="r" style="left:2px;top:900px;width:2988px;height:36px;background:#e7e6ff;"></div>
<div class="m" style="left:99.74px;top:900.69px;color:#12272e;">29</div>
<div class="m" style="left:151.55px;top:900.69px;color:#12272e;">13.149403</div>
<div class="m" style="left:369.05px;top:900.69px;color:#12272e;">172.16.171.146</div>
<div class="m" style="left:696.95px;top:900.69px;color:#12272e;">172.16.171.1</div>
<div class="m" style="left:1024.70px;top:900.69px;color:#12272e;">TLCP</div>
<div class="m" style="left:1514.01px;top:900.69px;color:#12272e;">151</div>
<div class="m" style="left:1581.45px;top:900.69px;color:#12272e;width:1400px;overflow:hidden;">Application Data</div>
<div class="r" style="left:2px;top:936px;width:2988px;height:36px;background:#e7e6ff;"></div>
<div class="m" style="left:99.74px;top:936.69px;color:#12272e;">30</div>
<div class="m" style="left:151.55px;top:936.69px;color:#12272e;">13.149411</div>
<div class="m" style="left:369.05px;top:936.69px;color:#12272e;">172.16.171.1</div>
<div class="m" style="left:696.95px;top:936.69px;color:#12272e;">172.16.171.146</div>
<div class="m" style="left:1024.70px;top:936.69px;color:#12272e;">TCP</div>
<div class="m" style="left:1529.64px;top:936.69px;color:#12272e;">66</div>
<div class="m" style="left:1581.45px;top:936.69px;color:#12272e;width:1400px;overflow:hidden;">56316 <span class="ar">→</span> 8443 [ACK] Seq=1092 Ack=1798 Win=130944 Len=0 TSval=401114551 TSecr=3316300217</div>
<div class="r" style="left:2px;top:972px;width:2988px;height:36px;background:#e7e6ff;"></div>
<div class="m" style="left:68.48px;top:972.69px;color:#12272e;">2509</div>
<div class="m" style="left:151.55px;top:972.69px;color:#12272e;">28.150833</div>
<div class="m" style="left:369.05px;top:972.69px;color:#12272e;">172.16.171.1</div>
<div class="m" style="left:696.95px;top:972.69px;color:#12272e;">172.16.171.146</div>
<div class="m" style="left:1024.70px;top:972.69px;color:#12272e;">TCP</div>
<div class="m" style="left:1529.64px;top:972.69px;color:#12272e;">54</div>
<div class="m" style="left:1581.45px;top:972.69px;color:#12272e;width:1400px;overflow:hidden;">[TCP Keep-Alive] 56316 <span class="ar">→</span> 8443 [ACK] Seq=1091 Ack=1798 Win=131072 Len=0</div>
<div class="r" style="left:2px;top:1008px;width:2988px;height:36px;background:#e7e6ff;"></div>
<div class="m" style="left:68.48px;top:1008.69px;color:#12272e;">2510</div>
<div class="m" style="left:151.55px;top:1008.69px;color:#12272e;">28.153342</div>
<div class="m" style="left:369.05px;top:1008.69px;color:#12272e;">172.16.171.146</div>
<div class="m" style="left:696.95px;top:1008.69px;color:#12272e;">172.16.171.1</div>
<div class="m" style="left:1024.70px;top:1008.69px;color:#12272e;">TCP</div>
<div class="m" style="left:1529.64px;top:1008.69px;color:#12272e;">66</div>
<div class="m" style="left:1581.45px;top:1008.69px;color:#12272e;width:1400px;overflow:hidden;">[TCP Keep-Alive ACK] 8443 <span class="ar">→</span> 56316 [ACK] Seq=1798 Ack=1092 Win=65536 Len=0 TSval=33163152…</div>
<div class="r" style="left:2px;top:1044px;width:2988px;height:36px;background:#e7e6ff;"></div>
<div class="m" style="left:68.48px;top:1044.69px;color:#12272e;">2511</div>
<div class="m" style="left:151.55px;top:1044.69px;color:#12272e;">28.177857</div>
<div class="m" style="left:369.05px;top:1044.69px;color:#12272e;">172.16.171.146</div>
<div class="m" style="left:696.95px;top:1044.69px;color:#12272e;">172.16.171.1</div>
<div class="m" style="left:1024.70px;top:1044.69px;color:#12272e;">TCP</div>
<div class="m" style="left:1529.64px;top:1044.69px;color:#12272e;">66</div>
<div class="m" style="left:1581.45px;top:1044.69px;color:#12272e;width:1400px;overflow:hidden;">[TCP Keep-Alive] 8443 <span class="ar">→</span> 56316 [ACK] Seq=1797 Ack=1092 Win=65536 Len=0 TSval=3316315246 T…</div>
<div class="r" style="left:2px;top:1080px;width:2988px;height:36px;background:#e7e6ff;"></div>
<div class="m" style="left:68.48px;top:1080.69px;color:#12272e;">2512</div>
<div class="m" style="left:151.55px;top:1080.69px;color:#12272e;">28.177937</div>
<div class="m" style="left:369.05px;top:1080.69px;color:#12272e;">172.16.171.1</div>
<div class="m" style="left:696.95px;top:1080.69px;color:#12272e;">172.16.171.146</div>
<div class="m" style="left:1024.70px;top:1080.69px;color:#12272e;">TCP</div>
<div class="m" style="left:1529.64px;top:1080.69px;color:#12272e;">66</div>
<div class="m" style="left:1581.45px;top:1080.69px;color:#12272e;width:1400px;overflow:hidden;">[TCP Keep-Alive ACK] 56316 <span class="ar">→</span> 8443 [ACK] Seq=1092 Ack=1798 Win=131072 Len=0 TSval=4011295…</div>
<div class="r" style="left:2px;top:1116px;width:2988px;height:36px;background:#e7e6ff;"></div>
<div class="m" style="left:68.48px;top:1116.69px;color:#12272e;">2513</div>
<div class="m" style="left:151.55px;top:1116.69px;color:#12272e;">30.937186</div>
<div class="m" style="left:369.05px;top:1116.69px;color:#12272e;">172.16.171.1</div>
<div class="m" style="left:696.95px;top:1116.69px;color:#12272e;">172.16.171.146</div>
<div class="m" style="left:1024.70px;top:1116.69px;color:#12272e;">TLCP</div>
<div class="m" style="left:1514.01px;top:1116.69px;color:#12272e;">135</div>
<div class="m" style="left:1581.45px;top:1116.69px;color:#12272e;width:1400px;overflow:hidden;">Encrypted Alert</div>
<div class="r" style="left:2px;top:1152px;width:2988px;height:36px;background:#a0a0a0;"></div>
<div class="m" style="left:68.48px;top:1152.69px;color:#12272e;">2514</div>
<div class="m" style="left:151.55px;top:1152.69px;color:#12272e;">30.937280</div>
<div class="m" style="left:369.05px;top:1152.69px;color:#12272e;">172.16.171.1</div>
<div class="m" style="left:696.95px;top:1152.69px;color:#12272e;">172.16.171.146</div>
<div class="m" style="left:1024.70px;top:1152.69px;color:#12272e;">TCP</div>
<div class="m" style="left:1529.64px;top:1152.69px;color:#12272e;">66</div>
<div class="m" style="left:1581.45px;top:1152.69px;color:#12272e;width:1400px;overflow:hidden;">56316 <span class="ar">→</span> 8443 [FIN, ACK] Seq=1161 Ack=1798 Win=131072 Len=0 TSval=401132339 TSecr=3316315…</div>
<div class="r" style="left:2px;top:1188px;width:2988px;height:36px;background:#e7e6ff;"></div>
<div class="m" style="left:68.48px;top:1188.69px;color:#12272e;">2515</div>
<div class="m" style="left:151.55px;top:1188.69px;color:#12272e;">30.981903</div>
<div class="m" style="left:369.05px;top:1188.69px;color:#12272e;">172.16.171.146</div>
<div class="m" style="left:696.95px;top:1188.69px;color:#12272e;">172.16.171.1</div>
<div class="m" style="left:1024.70px;top:1188.69px;color:#12272e;">TCP</div>
<div class="m" style="left:1529.64px;top:1188.69px;color:#12272e;">66</div>
<div class="m" style="left:1581.45px;top:1188.69px;color:#12272e;width:1400px;overflow:hidden;">8443 <span class="ar">→</span> 56316 [ACK] Seq=1798 Ack=1162 Win=65536 Len=0 TSval=3316318050 TSecr=401132339</div>
<div class="r" style="left:2px;top:1224px;width:2988px;height:36px;background:#a0a0a0;"></div>
<div class="m" style="left:68.48px;top:1224.69px;color:#12272e;">2516</div>
<div class="m" style="left:151.55px;top:1224.69px;color:#12272e;">33.821106</div>
<div class="m" style="left:369.05px;top:1224.69px;color:#12272e;">172.16.171.146</div>
<div class="m" style="left:696.95px;top:1224.69px;color:#12272e;">172.16.171.1</div>
<div class="m" style="left:1024.70px;top:1224.69px;color:#12272e;">TCP</div>
<div class="m" style="left:1529.64px;top:1224.69px;color:#12272e;">66</div>
<div class="m" style="left:1581.45px;top:1224.69px;color:#12272e;width:1400px;overflow:hidden;">8443 <span class="ar">→</span> 56316 [FIN, ACK] Seq=1798 Ack=1162 Win=65536 Len=0 TSval=3316320889 TSecr=4011323…</div>
<div class="r" style="left:2px;top:1260px;width:2988px;height:36px;background:#e7e6ff;"></div>
<div class="m" style="left:68.48px;top:1260.69px;color:#12272e;">2517</div>
<div class="m" style="left:151.55px;top:1260.69px;color:#12272e;">33.821477</div>
<div class="m" style="left:369.05px;top:1260.69px;color:#12272e;">172.16.171.1</div>
<div class="m" style="left:696.95px;top:1260.69px;color:#12272e;">172.16.171.146</div>
<div class="m" style="left:1024.70px;top:1260.69px;color:#12272e;">TCP</div>
<div class="m" style="left:1529.64px;top:1260.69px;color:#12272e;">66</div>
<div class="m" style="left:1581.45px;top:1260.69px;color:#12272e;width:1400px;overflow:hidden;">56316 <span class="ar">→</span> 8443 [ACK] Seq=1162 Ack=1799 Win=131072 Len=0 TSval=401135223 TSecr=3316320889</div>
<div class="r" style="left:18px;top:234px;width:1.8px;height:1046px;background:#7e8a8c;"></div>
<div class="r" style="left:18px;top:234px;width:16px;height:1.8px;background:#7e8a8c;"></div>
<div class="r" style="left:18px;top:1278px;width:16px;height:1.8px;background:#7e8a8c;"></div>
<div class="r" style="left:0px;top:1300px;width:2992px;height:1px;background:#a8a8a8;"></div>
<div class="r" style="left:0px;top:1301px;width:2992px;height:15px;background:#d5d5d5;"></div>
<div class="r" style="left:1489.8px;top:1302.7px;width:12px;height:12px;border-radius:50%;background:#bfbfbf;"></div>
<div class="r" style="left:0px;top:1316px;width:1811px;height:1.5px;background:#9c9c9c;"></div>
<div class="r" style="left:0px;top:1317px;width:1811px;height:493px;background:#fff;"></div>
<div class="r" style="left:0px;top:1317px;width:1.8px;height:493px;background:#b9b9b9;"></div>
<div class="r" style="left:1809.5px;top:1317px;width:1.5px;height:493px;background:#b0b0b0;"></div>
<div class="r" style="left:2px;top:1317px;width:1807px;height:492px;overflow:hidden;">
<div class="m" style="left:170.00px;top:-2.11px;color:#222222;-webkit-text-stroke:0.12px currentColor;">Length: 1140</div>
<div class="m" style="left:170.00px;top:33.89px;color:#222222;-webkit-text-stroke:0.12px currentColor;">Certificates Length: 1137</div>
<div class="m" style="left:170.00px;top:69.89px;color:#222222;-webkit-text-stroke:0.12px currentColor;">Certificates (1137 bytes)</div>
<svg style="left:132px;top:80.20000000000005px" width="18" height="12" viewBox="0 0 18 12"><path d="M1.5,2 L9,9.5 L16.5,2" fill="none" stroke="#bdbdbd" stroke-width="2.4"/></svg>
<div class="m" style="left:210.00px;top:105.89px;color:#222222;-webkit-text-stroke:0.12px currentColor;">Certificate Length: 567</div>
<div class="m" style="left:210.00px;top:141.89px;color:#222222;-webkit-text-stroke:0.12px currentColor;">Certificate […]: 30820233308201d8a00302010202105e19af12e3fdba2fe54d2b6f8bd64f1f300a06082a811ccf55018375</div>
<svg style="left:172px;top:152.20000000000005px" width="18" height="12" viewBox="0 0 18 12"><path d="M1.5,2 L9,9.5 L16.5,2" fill="none" stroke="#bdbdbd" stroke-width="2.4"/></svg>
<div class="m" style="left:250.00px;top:177.89px;color:#222222;-webkit-text-stroke:0.12px currentColor;">signedCertificate</div>
<svg style="left:212px;top:188.20000000000005px" width="18" height="12" viewBox="0 0 18 12"><path d="M1.5,2 L9,9.5 L16.5,2" fill="none" stroke="#bdbdbd" stroke-width="2.4"/></svg>
<div class="m" style="left:290.00px;top:213.89px;color:#222222;-webkit-text-stroke:0.12px currentColor;">version: v3 (2)</div>
<div class="m" style="left:290.00px;top:249.89px;color:#222222;-webkit-text-stroke:0.12px currentColor;">serialNumber: 0x5e19af12e3fdba2fe54d2b6f8bd64f1f</div>
<div class="m" style="left:290.00px;top:285.89px;color:#222222;-webkit-text-stroke:0.12px currentColor;">signature (SM2-with-SM3)</div>
<svg style="left:256.8px;top:291.50000000000006px" width="12" height="18" viewBox="0 0 12 18"><path d="M2,1.5 L9.5,9 L2,16.5" fill="none" stroke="#bdbdbd" stroke-width="2.4"/></svg>
<div class="m" style="left:290.00px;top:321.89px;color:#222222;-webkit-text-stroke:0.12px currentColor;">issuer: rdnSequence (0)</div>
<svg style="left:256.8px;top:327.50000000000006px" width="12" height="18" viewBox="0 0 12 18"><path d="M2,1.5 L9.5,9 L2,16.5" fill="none" stroke="#bdbdbd" stroke-width="2.4"/></svg>
<div class="m" style="left:290.00px;top:357.89px;color:#222222;-webkit-text-stroke:0.12px currentColor;">validity</div>
<svg style="left:256.8px;top:363.50000000000006px" width="12" height="18" viewBox="0 0 12 18"><path d="M2,1.5 L9.5,9 L2,16.5" fill="none" stroke="#bdbdbd" stroke-width="2.4"/></svg>
<div class="m" style="left:290.00px;top:393.89px;color:#222222;-webkit-text-stroke:0.12px currentColor;">subject: rdnSequence (0)</div>
<svg style="left:256.8px;top:399.50000000000006px" width="12" height="18" viewBox="0 0 12 18"><path d="M2,1.5 L9.5,9 L2,16.5" fill="none" stroke="#bdbdbd" stroke-width="2.4"/></svg>
<div class="m" style="left:290.00px;top:429.89px;color:#222222;-webkit-text-stroke:0.12px currentColor;">subjectPublicKeyInfo</div>
<svg style="left:256.8px;top:435.50000000000006px" width="12" height="18" viewBox="0 0 12 18"><path d="M2,1.5 L9.5,9 L2,16.5" fill="none" stroke="#bdbdbd" stroke-width="2.4"/></svg>
<div class="m" style="left:290.00px;top:465.89px;color:#222222;-webkit-text-stroke:0.12px currentColor;">extensions: 4 items</div>
<svg style="left:252px;top:476.20000000000005px" width="18" height="12" viewBox="0 0 18 12"><path d="M1.5,2 L9,9.5 L16.5,2" fill="none" stroke="#bdbdbd" stroke-width="2.4"/></svg>
</div>
<div class="r" style="left:1811px;top:1317px;width:15px;height:493px;background:#d5d5d5;"></div>
<div class="r" style="left:1812.9px;top:1557px;width:12px;height:12px;border-radius:50%;background:#bdbdbd;"></div>
<div class="r" style="left:1826px;top:1316px;width:1165px;height:1.5px;background:#9c9c9c;"></div>
<div class="r" style="left:1826px;top:1317px;width:1165px;height:493px;background:#fff;"></div>
<div class="r" style="left:1826px;top:1317px;width:1.2px;height:493px;background:#b3b3b3;"></div>
<div class="r" style="left:2989.5px;top:1317px;width:1.5px;height:493px;background:#b0b0b0;"></div>
<div class="r" style="left:1827.5px;top:1317px;width:94px;height:490px;background:#ececec;"></div>
<div class="r" style="left:1936px;top:1317px;width:752px;height:483px;background:#ececec;"></div>
<div class="r" style="left:2732.6px;top:1317px;width:257px;height:483px;background:#ececec;"></div>
<div class="r" style="left:2170.5px;top:1588px;width:516.5px;height:30px;background:#a6d0fb;"></div>
<div class="r" style="left:1936px;top:1618px;width:219.5px;height:30px;background:#a6d0fb;"></div>
<div class="r" style="left:2811px;top:1588px;width:180px;height:30px;background:#a6d0fb;"></div>
<div class="r" style="left:2732.6px;top:1618px;width:78.4px;height:30px;background:#a6d0fb;"></div>
<div class="m" style="left:1843.40px;top:1318.69px;color:#9c9c9c;-webkit-text-stroke:0.12px currentColor;">03b0</div>
<div class="m" style="left:1936.10px;top:1318.69px;color:#1d1d1d;-webkit-text-stroke:0.12px currentColor;">0a 13 0a 47 4d 54 4c 53  20 44 65 6d 6f 31 13 30</div>
<div class="m" style="left:2733.00px;top:1318.69px;color:#1d1d1d;width:258px;overflow:hidden;-webkit-text-stroke:0.12px currentColor;">···GMTLS  Demo1·0</div>
<div class="m" style="left:1843.40px;top:1348.69px;color:#9c9c9c;-webkit-text-stroke:0.12px currentColor;">03c0</div>
<div class="m" style="left:1936.10px;top:1348.69px;color:#1d1d1d;-webkit-text-stroke:0.12px currentColor;">11 06 03 55 04 0b 13 0a  53 65 72 76 65 72 20 45</div>
<div class="m" style="left:2733.00px;top:1348.69px;color:#1d1d1d;width:258px;overflow:hidden;-webkit-text-stroke:0.12px currentColor;">···U···· Server E</div>
<div class="m" style="left:1843.40px;top:1378.69px;color:#9c9c9c;-webkit-text-stroke:0.12px currentColor;">03d0</div>
<div class="m" style="left:1936.10px;top:1378.69px;color:#1d1d1d;-webkit-text-stroke:0.12px currentColor;">6e 63 31 12 30 10 06 03  55 04 03 13 09 6c 6f 63</div>
<div class="m" style="left:2733.00px;top:1378.69px;color:#1d1d1d;width:258px;overflow:hidden;-webkit-text-stroke:0.12px currentColor;">nc1·0··· U····loc</div>
<div class="m" style="left:1843.40px;top:1408.69px;color:#9c9c9c;-webkit-text-stroke:0.12px currentColor;">03e0</div>
<div class="m" style="left:1936.10px;top:1408.69px;color:#1d1d1d;-webkit-text-stroke:0.12px currentColor;">61 6c 68 6f 73 74 30 59  30 13 06 07 2a 86 48 ce</div>
<div class="m" style="left:2733.00px;top:1408.69px;color:#1d1d1d;width:258px;overflow:hidden;-webkit-text-stroke:0.12px currentColor;">alhost0Y 0···*·H·</div>
<div class="m" style="left:1843.40px;top:1438.69px;color:#9c9c9c;-webkit-text-stroke:0.12px currentColor;">03f0</div>
<div class="m" style="left:1936.10px;top:1438.69px;color:#1d1d1d;-webkit-text-stroke:0.12px currentColor;">3d 02 01 06 08 2a 81 1c  cf 55 01 82 2d 03 42 00</div>
<div class="m" style="left:2733.00px;top:1438.69px;color:#1d1d1d;width:258px;overflow:hidden;-webkit-text-stroke:0.12px currentColor;">=····*·· ·U··-·B·</div>
<div class="m" style="left:1843.40px;top:1468.69px;color:#9c9c9c;-webkit-text-stroke:0.12px currentColor;">0400</div>
<div class="m" style="left:1936.10px;top:1468.69px;color:#1d1d1d;-webkit-text-stroke:0.12px currentColor;">04 d6 a8 c0 be 39 f6 fe  0d 73 35 ea a3 8d bd e7</div>
<div class="m" style="left:2733.00px;top:1468.69px;color:#1d1d1d;width:258px;overflow:hidden;-webkit-text-stroke:0.12px currentColor;">·····9·· ·s5·····</div>
<div class="m" style="left:1843.40px;top:1498.69px;color:#9c9c9c;-webkit-text-stroke:0.12px currentColor;">0410</div>
<div class="m" style="left:1936.10px;top:1498.69px;color:#1d1d1d;-webkit-text-stroke:0.12px currentColor;">92 fe 79 fe 4d f0 f9 29  c7 fb 00 75 fb 57 53 de</div>
<div class="m" style="left:2733.00px;top:1498.69px;color:#1d1d1d;width:258px;overflow:hidden;-webkit-text-stroke:0.12px currentColor;">··y·M··) ···u·WS·</div>
<div class="m" style="left:1843.40px;top:1528.69px;color:#9c9c9c;-webkit-text-stroke:0.12px currentColor;">0420</div>
<div class="m" style="left:1936.10px;top:1528.69px;color:#1d1d1d;-webkit-text-stroke:0.12px currentColor;">73 1f 43 98 c9 5b 43 4d  99 6e e2 c7 67 c9 e0 79</div>
<div class="m" style="left:2733.00px;top:1528.69px;color:#1d1d1d;width:258px;overflow:hidden;-webkit-text-stroke:0.12px currentColor;">s·C··[CM ·n··g··y</div>
<div class="m" style="left:1843.40px;top:1558.69px;color:#9c9c9c;-webkit-text-stroke:0.12px currentColor;">0430</div>
<div class="m" style="left:1936.10px;top:1558.69px;color:#1d1d1d;-webkit-text-stroke:0.12px currentColor;">b7 0f da ab bf 34 fe 4c  c8 57 8f cd 4b 31 5c f0</div>
<div class="m" style="left:2733.00px;top:1558.69px;color:#1d1d1d;width:258px;overflow:hidden;-webkit-text-stroke:0.12px currentColor;">·····4·L ·W··K1\·</div>
<div class="m" style="left:1843.40px;top:1588.69px;color:#9c9c9c;-webkit-text-stroke:0.12px currentColor;">0440</div>
<div class="m" style="left:1936.10px;top:1588.69px;color:#1d1d1d;-webkit-text-stroke:0.12px currentColor;">95 a3 56 30 54 30 0e 06  03 55 1d 0f 01 01 ff 04</div>
<div class="m" style="left:2733.00px;top:1588.69px;color:#1d1d1d;width:258px;overflow:hidden;-webkit-text-stroke:0.12px currentColor;">··V0T0·· ·U······</div>
<div class="m" style="left:1843.40px;top:1618.69px;color:#9c9c9c;-webkit-text-stroke:0.12px currentColor;">0450</div>
<div class="m" style="left:1936.10px;top:1618.69px;color:#1d1d1d;-webkit-text-stroke:0.12px currentColor;">04 03 02 05 20 30 13 06  03 55 1d 25 04 0c 30 0a</div>
<div class="m" style="left:2733.00px;top:1618.69px;color:#1d1d1d;width:258px;overflow:hidden;-webkit-text-stroke:0.12px currentColor;">···· 0·· ·U·%··0·</div>
<div class="m" style="left:1843.40px;top:1648.69px;color:#9c9c9c;-webkit-text-stroke:0.12px currentColor;">0460</div>
<div class="m" style="left:1936.10px;top:1648.69px;color:#1d1d1d;-webkit-text-stroke:0.12px currentColor;">06 08 2b 06 01 05 05 07  03 01 30 0c 06 03 55 1d</div>
<div class="m" style="left:2733.00px;top:1648.69px;color:#1d1d1d;width:258px;overflow:hidden;-webkit-text-stroke:0.12px currentColor;">··+····· ··0···U·</div>
<div class="m" style="left:1843.40px;top:1678.69px;color:#9c9c9c;-webkit-text-stroke:0.12px currentColor;">0470</div>
<div class="m" style="left:1936.10px;top:1678.69px;color:#1d1d1d;-webkit-text-stroke:0.12px currentColor;">13 01 01 ff 04 02 30 00  30 1f 06 03 55 1d 11 04</div>
<div class="m" style="left:2733.00px;top:1678.69px;color:#1d1d1d;width:258px;overflow:hidden;-webkit-text-stroke:0.12px currentColor;">······0· 0···U···</div>
<div class="m" style="left:1843.40px;top:1708.69px;color:#9c9c9c;-webkit-text-stroke:0.12px currentColor;">0480</div>
<div class="m" style="left:1936.10px;top:1708.69px;color:#1d1d1d;-webkit-text-stroke:0.12px currentColor;">18 30 16 82 09 6c 6f 63  61 6c 68 6f 73 74 82 09</div>
<div class="m" style="left:2733.00px;top:1708.69px;color:#1d1d1d;width:258px;overflow:hidden;-webkit-text-stroke:0.12px currentColor;">·0···loc alhost··</div>
<div class="m" style="left:1843.40px;top:1738.69px;color:#9c9c9c;-webkit-text-stroke:0.12px currentColor;">0490</div>
<div class="m" style="left:1936.10px;top:1738.69px;color:#1d1d1d;-webkit-text-stroke:0.12px currentColor;">31 32 37 2e 30 2e 30 2e  31 30 0a 06 08 2a 81 1c</div>
<div class="m" style="left:2733.00px;top:1738.69px;color:#1d1d1d;width:258px;overflow:hidden;-webkit-text-stroke:0.12px currentColor;">127.0.0. 10···*··</div>
<div class="m" style="left:1843.40px;top:1768.69px;color:#9c9c9c;-webkit-text-stroke:0.12px currentColor;">04a0</div>
<div class="m" style="left:1936.10px;top:1768.69px;color:#1d1d1d;-webkit-text-stroke:0.12px currentColor;">cf 55 01 83 75 03 47 00  30 44 02 20 5f 3b 2a 5d</div>
<div class="m" style="left:2733.00px;top:1768.69px;color:#1d1d1d;width:258px;overflow:hidden;-webkit-text-stroke:0.12px currentColor;">·U··u·G· 0D· _;*]</div>
<div class="r" style="left:0px;top:1809.5px;width:2991px;height:1.5px;background:#7a7a7a;"></div>
<div class="r" style="left:0;top:1811px;width:2991px;height:53px;background:linear-gradient(#e9e9e9,#d2d2d2 50%,#b4b4b4);border-radius:0 0 22px 22px;"></div>
<div class="r" style="left:20.1px;top:1821.9px;width:23.8px;height:23.8px;border-radius:50%;background:radial-gradient(circle at 40% 30%,#ebe98e,#dedd3a 75%,#e0dc20);border:2px solid #6b6d2e;"></div>
<svg style="left:71px;top:1821px" width="30" height="30" viewBox="0 0 30 30">
<rect x="0.8" y="1.2" width="20.4" height="27.2" fill="#f4f4ea" stroke="#b0b0a8" stroke-width="0.8"/>
<path d="M1.2,1.6 L16.5,1.6 Q18,1.6 18.5,3 L18.5,7.5 L1.2,7.5 Z" fill="#14a0dc"/>
<path d="M5.5,7.5 C6,4.5 8,3 10.5,3 C9,4.5 9,6 9.5,7.5 Z" fill="#fff" opacity="0.85"/>
<text x="11" y="15" font-family="Liberation Mono" font-size="5" fill="#c0c0b8" text-anchor="middle">0101</text>
<text x="11" y="21" font-family="Liberation Mono" font-size="5" fill="#c0c0b8" text-anchor="middle">0110</text>
<text x="11" y="27" font-family="Liberation Mono" font-size="5" fill="#c0c0b8" text-anchor="middle">01100</text>
<g transform="translate(17.5,13.5) rotate(-45)"><rect x="-9" y="-2.9" width="17" height="5.8" fill="#575957"/><rect x="8.6" y="-2.9" width="4" height="5.8" rx="1.5" fill="#4a4c4a"/><path d="M-9.6,-3.2 L-16,0 L-9.6,3.2 Z" fill="#050505"/></g></svg>
<div class="s" style="left:139.30px;top:1824.55px;font-size:23.7px;line-height:26.48px;color:#000;font-weight:400;">Extension (x509af.Extension_element), 16 bytes</div>
<div class="r" style="left:1953px;top:1832px;width:12px;height:12px;border-radius:50%;background:#c6c6c6;"></div>
<div class="s" style="left:1988.00px;top:1824.55px;font-size:23.7px;line-height:26.48px;color:#000;font-weight:400;">Packets: 2517 · Displayed: 30 (1.2%) · Dropped: 0 (0.0%)</div>
<div class="r" style="left:2770px;top:1832px;width:12px;height:12px;border-radius:50%;background:#c6c6c6;"></div>
<div class="s" style="left:2806.50px;top:1824.55px;font-size:23.7px;line-height:26.48px;color:#000;font-weight:400;">Profile: Default</div></div></body></html>
